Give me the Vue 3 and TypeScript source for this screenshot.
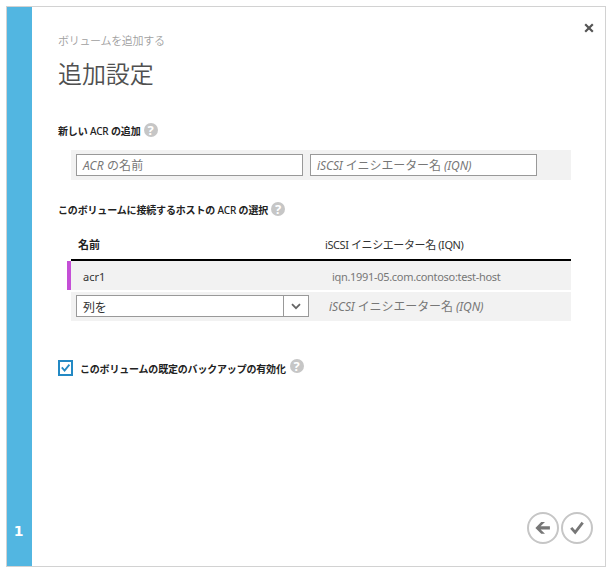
<script setup lang="ts">
import { ref } from 'vue'

interface Host {
  name: string
  iqn: string
}

const hosts = ref<Host[]>([{ name: 'acr1', iqn: 'iqn.1991-05.com.contoso:test-host' }])
const backup = ref(true)
</script>

<template>
  <div class="page">
    <div class="dialog">
      <aside class="strip"><span class="step">1</span></aside>
      <main class="body">
        <button class="close" aria-label="close">
          <svg width="10" height="10" viewBox="0 0 10 10"><path d="M1.2 1.2 8.8 8.8M8.8 1.2 1.2 8.8" /></svg>
        </button>
        <div class="crumb">ボリュームを追加する</div>
        <h1 class="title">追加設定</h1>

        <div class="label label-new">
          <span class="t1"><b>新しい</b> <i class="lat">ACR</i> <b>の追加</b></span>
          <span class="help">?</span>
        </div>
        <div class="band form">
          <div class="input"><span class="hint name"><em>ACR</em> の名前</span></div>
          <div class="input"><span class="hint"><em>iSCSI</em> イニシエーター名 <em>(IQN)</em></span></div>
        </div>

        <div class="label label-select">
          <span class="t2"><b>このボリュームに接続するホストの</b> <i class="lat">ACR</i> <b>の選択</b></span>
          <span class="help">?</span>
        </div>
        <div class="table">
          <div class="head">
            <span class="h1">名前</span>
            <span class="h2">iSCSI イニシエーター名 (IQN)</span>
          </div>
          <div v-for="h in hosts" :key="h.name" class="row band">
            <span class="mark"></span>
            <span class="c1">{{ h.name }}</span>
            <span class="c2">{{ h.iqn }}</span>
          </div>
          <div class="band edit">
            <div class="select">
              <span class="value">列を</span>
              <span class="arrow">
                <svg width="10" height="7" viewBox="0 0 10 7"><path d="M1 1.2 5 5.2 9 1.2" /></svg>
              </span>
            </div>
            <span class="hint"><em>iSCSI</em> イニシエーター名 <em>(IQN)</em></span>
          </div>
        </div>

        <div class="backup" @click="backup = !backup">
          <span class="box">
            <svg v-if="backup" width="11" height="12" viewBox="0 0 11 12"><path d="M1.8 5.4 4.6 8.6 9.4 2.6" /></svg>
          </span>
          <span class="t3">このボリュームの既定のバックアップの有効化</span>
          <span class="help">?</span>
        </div>

        <footer class="actions">
          <button class="round" aria-label="back">
            <svg width="32" height="32" viewBox="0 0 32 32">
              <circle cx="16" cy="16" r="15" />
              <path class="fill" d="M8.4 15.9 14.2 10.1H18L13.6 14.3H22.9V17.4H13.6L18 21.7H14.2Z" />
            </svg>
          </button>
          <button class="round" aria-label="finish">
            <svg width="32" height="32" viewBox="0 0 32 32">
              <circle cx="16" cy="16" r="15" />
              <path class="tick" d="M10.2 15.8 14.2 20.4 21.7 10.7" />
            </svg>
          </button>
        </footer>
      </main>
    </div>
  </div>
</template>

<style>
body {
  background: #fff;
}
</style>

<style scoped>
.page {
  box-sizing: border-box;
  width: 614px;
  height: 574px;
  padding: 6px 8px 7px 6px;
  font-family: 'Noto Sans', 'Noto Sans CJK JP', sans-serif;
  font-size: 11px;
  color: #333;
  background: #fff;
  white-space: nowrap;
}
.dialog {
  box-sizing: border-box;
  display: flex;
  height: 561px;
  border: 1px solid #d2d2d2;
}
.strip {
  display: flex;
  align-items: flex-end;
  justify-content: center;
  width: 25px;
  background: #52b6e1;
}
.step {
  margin: 0 2px 25px 0;
  color: #fff;
  font: bold 14px/20px 'DejaVu Sans', sans-serif;
}
.body {
  position: relative;
  flex: 1;
  display: flex;
  flex-direction: column;
  padding-left: 26px;
}
button {
  padding: 0;
  border: 0;
  background: none;
}
svg {
  display: block;
  fill: none;
}
.close {
  position: absolute;
  top: 16px;
  right: 11px;
}
.close path {
  stroke: #555;
  stroke-width: 2.2;
}
.crumb {
  margin-top: 24px;
  height: 20px;
  line-height: 20px;
  color: #a0a0a0;
  font-weight: 350;
  letter-spacing: -0.3px;
}
.title {
  margin: 7px 0 0;
  height: 32px;
  font-size: 24px;
  font-weight: 350;
  letter-spacing: -0.1px;
  line-height: 32px;
  color: #505050;
}
.label {
  display: flex;
  align-items: center;
  gap: 4px;
  height: 20px;
  line-height: 20px;
  font-size: 10px;
  color: #222;
}
.label-new {
  margin-top: 31px;
}
.label-select {
  margin-top: 20px;
}
.t1,
.t2 {
  letter-spacing: -0.16px;
}
.t1 {
  margin-right: -1px;
}
.t2 {
  margin-right: -1px;
}
.lat {
  font-style: normal;
  font-weight: 500;
}
.help {
  width: 14px;
  height: 14px;
  margin-top: -2px;
  border-radius: 50%;
  background: #c6c6c6;
  color: #fff;
  font: bold 13px/14px 'Noto Sans', sans-serif;
  text-align: center;
}
.band {
  display: flex;
  background: #f2f2f2;
}
.form {
  box-sizing: border-box;
  width: 500px;
  height: 30px;
  margin: 9px 0 0 13px;
  padding: 4px 5px;
  gap: 7px;
}
.input {
  box-sizing: border-box;
  width: 227px;
  height: 22px;
  padding-left: 6px;
  border: 1px solid #999;
  background: #fff;
  line-height: 21px;
}
.hint {
  color: #777;
  font-size: 12px;
  letter-spacing: -0.1px;
}
.name {
  letter-spacing: 0.1px;
}
.table {
  width: 500px;
  margin: 10px 0 0 13px;
}
.head {
  display: flex;
  height: 29px;
  border-bottom: 2px solid #000;
  line-height: 29px;
}
.h1 {
  width: 247px;
  padding-left: 7px;
  font-weight: bold;
  color: #222;
}
.h2 {
  letter-spacing: -0.41px;
}
.row {
  position: relative;
  height: 29px;
  line-height: 31px;
}
.mark {
  position: absolute;
  left: -4px;
  width: 4px;
  height: 29px;
  background: #c44fd6;
}
.c1 {
  width: 249px;
  padding-left: 12px;
}
.c2 {
  color: #777;
  letter-spacing: -0.31px;
}
.edit {
  box-sizing: border-box;
  height: 29px;
  margin-top: 2px;
  padding: 3px 5px;
  line-height: 23px;
}
.select {
  box-sizing: border-box;
  display: flex;
  width: 233px;
  height: 22px;
  margin-right: 20px;
  border: 1px solid #999;
  background: #fff;
  color: #333;
}
.value {
  flex: 1;
  padding-left: 6px;
  font-size: 12px;
  letter-spacing: -0.2px;
}
.arrow {
  display: flex;
  align-items: center;
  justify-content: center;
  width: 24px;
  padding-top: 1px;
  border-left: 1px solid #999;
}
.arrow path {
  stroke: #666;
  stroke-width: 1.8;
}
.backup {
  display: flex;
  align-items: center;
  height: 20px;
  margin-top: 37px;
  font-size: 10px;
}
.box {
  box-sizing: border-box;
  width: 15px;
  height: 16px;
  margin-right: 7px;
  border: 2px solid #2389c4;
}
.box path {
  stroke: #2389c4;
  stroke-width: 1.8;
}
.t3 {
  margin-right: 4px;
  font-weight: bold;
  letter-spacing: -0.19px;
  color: #222;
}
.backup .help {
  margin-top: -4px;
}
.actions {
  display: flex;
  gap: 2px;
  margin: auto 12px 22px auto;
}
.round circle {
  stroke: #c6c6c6;
  stroke-width: 2;
}
.round .fill {
  fill: #777;
}
.round .tick {
  stroke: #777;
  stroke-width: 2.8;
}
</style>
